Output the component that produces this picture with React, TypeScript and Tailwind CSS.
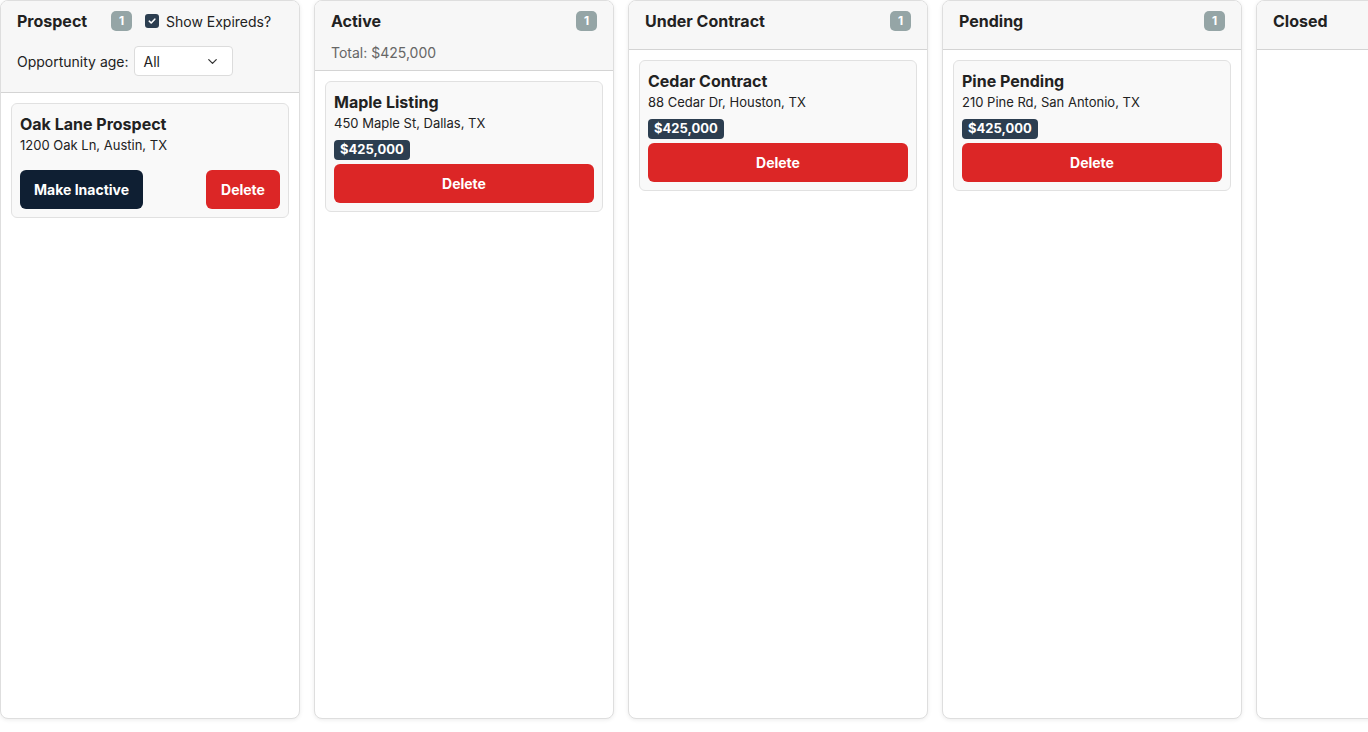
import React from "react";
import { ChevronDown } from "lucide-react";

type Deal = { title: string; address: string; price?: string; prospect?: boolean };

const Badge = ({ n }: { n: number }) => (
  <span className="inline-flex h-[20px] min-w-[21px] items-center justify-center rounded-[5px] bg-[#95a5a6] px-1.5 text-[12px] font-bold leading-none text-white">
    {n}
  </span>
);

function Card({ d }: { d: Deal }) {
  return (
    <div className="rounded-[6px] border border-[#e1e1e1] bg-[#f9f9f9] p-2">
      <div className="text-[16px] font-bold leading-6 text-[#222]">{d.title}</div>
      <div className="text-[13px] leading-[18px] text-[#222]">{d.address}</div>
      {d.prospect ? (
        <div className="mt-4 flex items-center justify-between">
          <button className="h-[39px] rounded-[6px] bg-[#0f1f33] px-[14px] text-[14px] font-bold text-white">
            Make Inactive
          </button>
          <button className="h-[39px] w-[74px] rounded-[6px] bg-[#dc2626] text-[14px] font-bold text-white">
            Delete
          </button>
        </div>
      ) : (
        <>
          <div className="mt-2 inline-flex h-[20px] items-center rounded-[4px] bg-[#2c3e50] px-[6px] text-[13px] font-bold text-white">
            {d.price}
          </div>
          <button className="mt-1 block h-[39px] w-full rounded-[6px] bg-[#dc2626] text-[14px] font-bold text-white">
            Delete
          </button>
        </>
      )}
    </div>
  );
}

function Column({
  title,
  count,
  deals,
  extra,
}: {
  title: string;
  count?: number;
  deals: Deal[];
  extra?: React.ReactNode;
}) {
  return (
    <div className="flex h-[719px] w-[300px] shrink-0 flex-col overflow-hidden rounded-[8px] border border-[#dedede] bg-white shadow-[0_1px_4px_rgba(0,0,0,0.08)]">
      {extra}
      {!extra && (
        <div className="border-b border-[#d4d4d4] bg-[#f7f7f7] px-4 pb-[16px] pt-[8px]">
          <div className="flex h-6 items-center justify-between">
            <span className="text-[16px] font-bold text-[#222]">{title}</span>
            {count !== undefined && <Badge n={count} />}
          </div>
        </div>
      )}
      <div className="flex flex-col gap-2.5 p-2.5">
        {deals.map((d) => (
          <Card key={d.title} d={d} />
        ))}
      </div>
    </div>
  );
}

export default function App() {
  const prospectHeader = (
    <div className="border-b border-[#d4d4d4] bg-[#f7f7f7] pb-[16px] pl-4 pr-4 pt-[8px]">
      <div className="flex h-6 items-center">
        <span className="w-[94px] text-[16px] font-bold text-[#222]">Prospect</span>
        <Badge n={1} />
        <span className="ml-[13px] flex h-[14px] w-[14px] items-center justify-center rounded-[3px] bg-[#2c3e50]">
          <svg width="10" height="10" viewBox="0 0 10 10" fill="none">
            <path d="M2.3 5.2 L4.2 7 L7.8 3.2" stroke="white" strokeWidth="1.6" strokeLinecap="round" strokeLinejoin="round" />
          </svg>
        </span>
        <span className="ml-[7px] text-[14px] text-[#222]">Show Expireds?</span>
      </div>
      <div className="mt-[13px] flex items-center">
        <span className="text-[14px] text-[#222]">Opportunity age:</span>
        <div className="ml-[5px] flex h-[30px] w-[99px] items-center justify-between rounded-[4px] border border-[#dcdcdc] bg-white pl-[9px] pr-[12px] text-[14px] text-[#222]">
          <span>All</span>
          <ChevronDown size={15} strokeWidth={2} className="text-[#333]" />
        </div>
      </div>
    </div>
  );

  const activeHeader = (
    <div className="border-b border-[#d4d4d4] bg-[#f7f7f7] px-4 pb-[7px] pt-[8px]">
      <div className="flex h-6 items-center justify-between">
        <span className="text-[16px] font-bold text-[#222]">Active</span>
        <Badge n={1} />
      </div>
      <div className="mt-[10px] text-[14px] leading-5 text-[#666]">Total: $425,000</div>
    </div>
  );

  return (
    <div
      className="flex h-[732px] w-[1368px] gap-[14px] overflow-hidden bg-white"
      style={{ fontFamily: "Inter, 'Noto Sans', sans-serif" }}
    >
      <Column
        title="Prospect"
        extra={prospectHeader}
        deals={[{ title: "Oak Lane Prospect", address: "1200 Oak Ln, Austin, TX", prospect: true }]}
      />
      <Column
        title="Active"
        extra={activeHeader}
        deals={[{ title: "Maple Listing", address: "450 Maple St, Dallas, TX", price: "$425,000" }]}
      />
      <Column
        title="Under Contract"
        count={1}
        deals={[{ title: "Cedar Contract", address: "88 Cedar Dr, Houston, TX", price: "$425,000" }]}
      />
      <Column
        title="Pending"
        count={1}
        deals={[{ title: "Pine Pending", address: "210 Pine Rd, San Antonio, TX", price: "$425,000" }]}
      />
      <Column title="Closed" deals={[]} />
    </div>
  );
}
